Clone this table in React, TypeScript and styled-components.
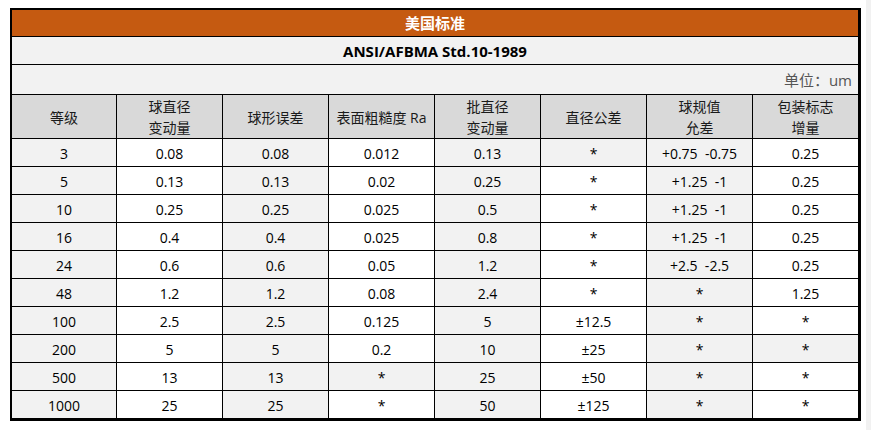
import React from "react"
import styled, { createGlobalStyle } from "styled-components"

const GlobalStyle = createGlobalStyle`
  html, body {
    margin: 0;
    padding: 0;
    background: #ffffff;
  }
  body {
    font-family: "Open Sans", "Noto Sans CJK SC", sans-serif;
    color: #000;
  }
`

const Page = styled.div`
  display: flex;
  width: 871px;
  height: 430px;
  overflow: hidden;
`

const Content = styled.div`
  flex: 1;
  padding: 8px 0 0 10px;
`

const ScrollTrack = styled.div`
  width: 5px;
  background: #f1f1f1;
`

const Table = styled.table`
  width: 851px;
  border: 2px solid #000;
  border-spacing: 0;
  table-layout: fixed;
  font-size: 14px;
  font-family: "Open Sans", "Noto Sans CJK SC", sans-serif;
`

const Cell = styled.td<{ $shade?: boolean }>`
  border-right: 1px solid #000;
  border-bottom: 1px solid #000;
  height: 25px;
  padding: 2px 0 0;
  text-align: center;
  vertical-align: middle;
  background: ${p => (p.$shade ? "#f2f2f2" : "#ffffff")};
  line-height: 20px;
  white-space: pre;
`

const TitleCell = styled(Cell)`
  height: 26px;
  padding: 0;
  background: #c55a11;
  color: #ffffff;
  font-weight: bold;
  font-size: 15px;
  font-family: "Noto Sans CJK SC", sans-serif;
`

const StdCell = styled(Cell)`
  height: 27px;
  padding: 0;
  background: #f2f2f2;
  font-weight: bold;
  font-size: 15px;
`

const UnitCell = styled(Cell)`
  height: 29px;
  padding: 0 6px 0 0;
  background: #f2f2f2;
  text-align: right;
  color: #555555;
  font-size: 15px;
`

const HeadCell = styled.th`
  border-right: 1px solid #000;
  border-bottom: 1px solid #000;
  height: 42px;
  padding: 1px 0 0;
  background: #d9d9d9;
  font-weight: normal;
  line-height: 21px;
  color: #1a1a1a;
  font-family: "Open Sans", "Noto Sans CJK SC", sans-serif;
`

const headers = [
  ["等级"],
  ["球直径", "变动量"],
  ["球形误差"],
  ["表面粗糙度 Ra"],
  ["批直径", "变动量"],
  ["直径公差"],
  ["球规值", "允差"],
  ["包装标志", "增量"],
]

const rows = [
  ["3", "0.08", "0.08", "0.012", "0.13", "*", "+0.75  -0.75", "0.25"],
  ["5", "0.13", "0.13", "0.02", "0.25", "*", "+1.25  -1", "0.25"],
  ["10", "0.25", "0.25", "0.025", "0.5", "*", "+1.25  -1", "0.25"],
  ["16", "0.4", "0.4", "0.025", "0.8", "*", "+1.25  -1", "0.25"],
  ["24", "0.6", "0.6", "0.05", "1.2", "*", "+2.5  -2.5", "0.25"],
  ["48", "1.2", "1.2", "0.08", "2.4", "*", "*", "1.25"],
  ["100", "2.5", "2.5", "0.125", "5", "±12.5", "*", "*"],
  ["200", "5", "5", "0.2", "10", "±25", "*", "*"],
  ["500", "13", "13", "*", "25", "±50", "*", "*"],
  ["1000", "25", "25", "*", "50", "±125", "*", "*"],
]

// odd columns are shaded, plus a few stray cells as in the sheet
const extraShade = ["0-5", "7-7", "8-3"]
const isShaded = (r: number, c: number) => c % 2 === 0 || extraShade.includes(`${r}-${c}`)

const App: React.FC = () => (
  <Page>
    <GlobalStyle />
    <Content>
      <Table>
        <colgroup>
          {headers.map((_, i) => (
            <col key={i} style={{ width: i === 0 ? 105 : 106 }} />
          ))}
        </colgroup>
        <thead>
          <tr>
            <TitleCell colSpan={8}>美国标准</TitleCell>
          </tr>
          <tr>
            <StdCell colSpan={8}>ANSI/AFBMA Std.10-1989</StdCell>
          </tr>
          <tr>
            <UnitCell colSpan={8}>单位：um</UnitCell>
          </tr>
          <tr>
            {headers.map((h, i) => (
              <HeadCell key={i}>
                {h.map((line, j) => (
                  <div key={j}>{line}</div>
                ))}
              </HeadCell>
            ))}
          </tr>
        </thead>
        <tbody>
          {rows.map((row, r) => (
            <tr key={r}>
              {row.map((v, c) => (
                <Cell key={c} $shade={isShaded(r, c)}>
                  {v}
                </Cell>
              ))}
            </tr>
          ))}
        </tbody>
      </Table>
    </Content>
    <ScrollTrack />
  </Page>
)

export default App
